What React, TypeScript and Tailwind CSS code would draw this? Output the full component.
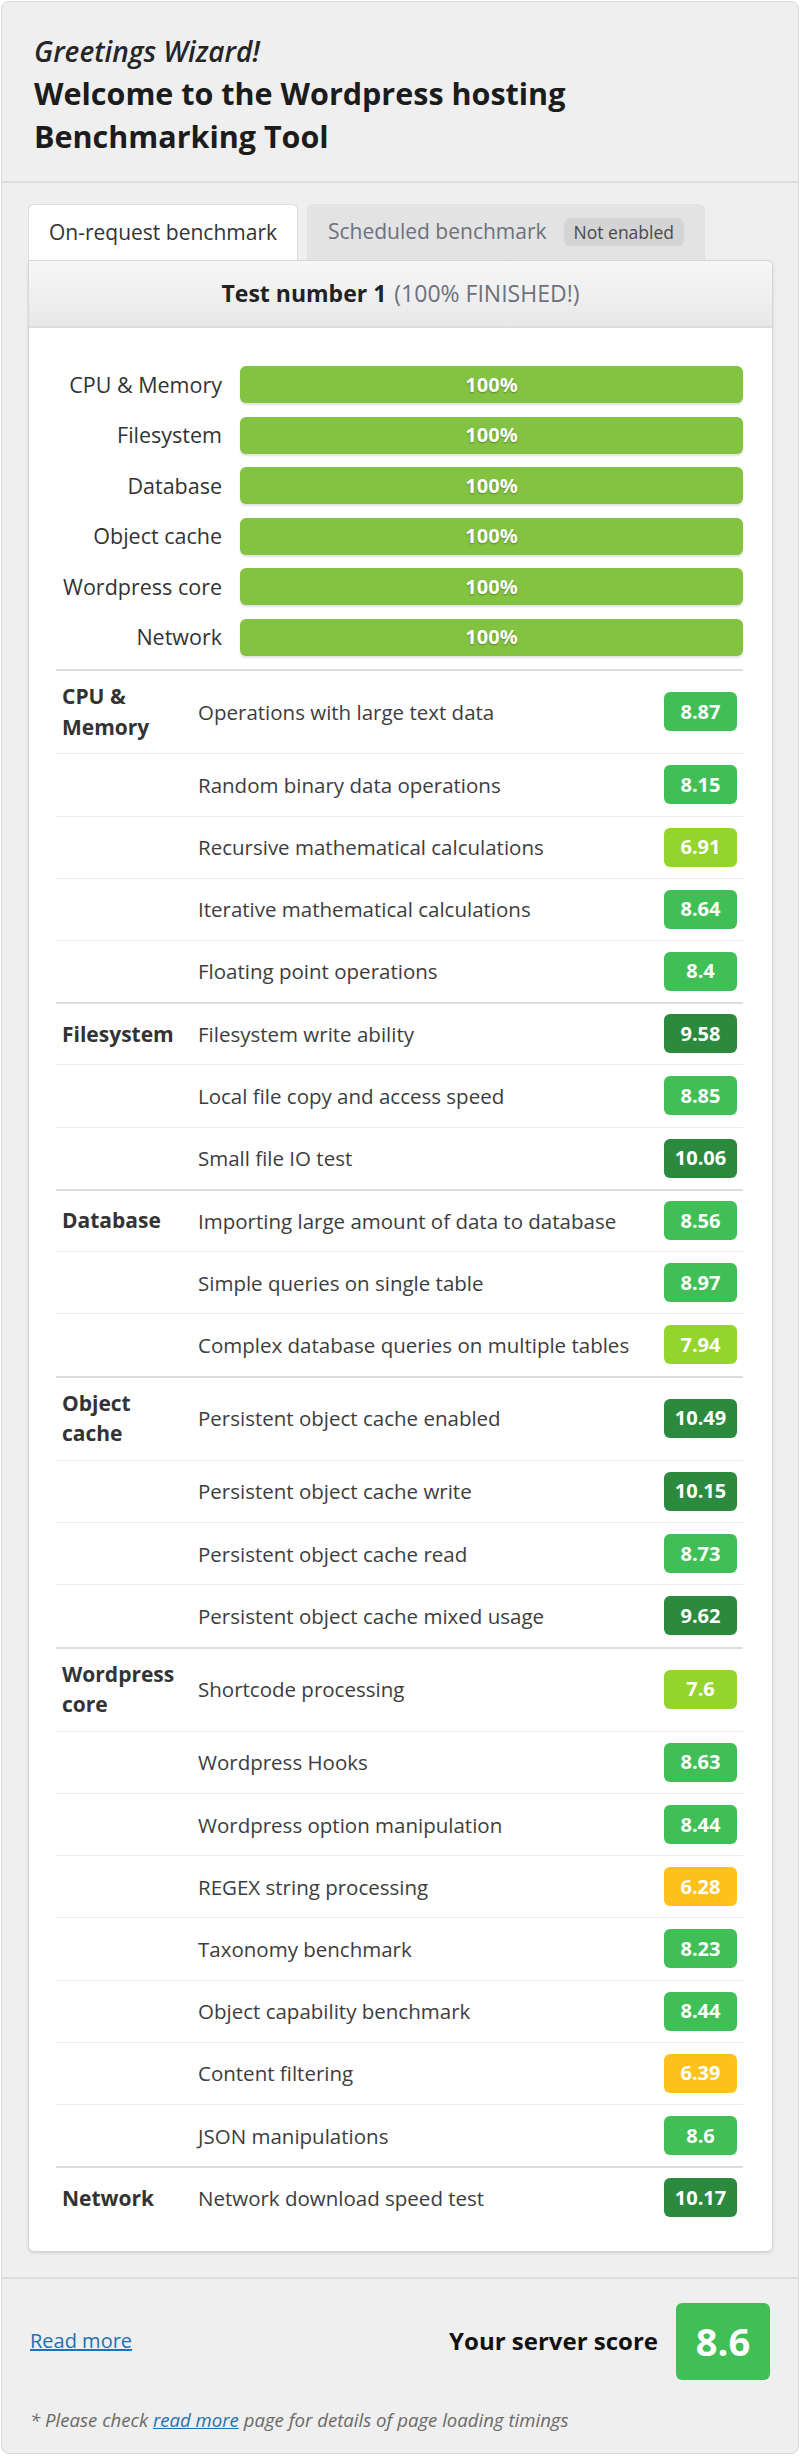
import React from "react";

type Test = { name: string; score: number };
type Group = { cat: string[]; tests: Test[] };

const groups: Group[] = [
  {
    cat: ["CPU &", "Memory"],
    tests: [
      { name: "Operations with large text data", score: 8.87 },
      { name: "Random binary data operations", score: 8.15 },
      { name: "Recursive mathematical calculations", score: 6.91 },
      { name: "Iterative mathematical calculations", score: 8.64 },
      { name: "Floating point operations", score: 8.4 },
    ],
  },
  {
    cat: ["Filesystem"],
    tests: [
      { name: "Filesystem write ability", score: 9.58 },
      { name: "Local file copy and access speed", score: 8.85 },
      { name: "Small file IO test", score: 10.06 },
    ],
  },
  {
    cat: ["Database"],
    tests: [
      { name: "Importing large amount of data to database", score: 8.56 },
      { name: "Simple queries on single table", score: 8.97 },
      { name: "Complex database queries on multiple tables", score: 7.94 },
    ],
  },
  {
    cat: ["Object", "cache"],
    tests: [
      { name: "Persistent object cache enabled", score: 10.49 },
      { name: "Persistent object cache write", score: 10.15 },
      { name: "Persistent object cache read", score: 8.73 },
      { name: "Persistent object cache mixed usage", score: 9.62 },
    ],
  },
  {
    cat: ["Wordpress", "core"],
    tests: [
      { name: "Shortcode processing", score: 7.6 },
      { name: "Wordpress Hooks", score: 8.63 },
      { name: "Wordpress option manipulation", score: 8.44 },
      { name: "REGEX string processing", score: 6.28 },
      { name: "Taxonomy benchmark", score: 8.23 },
      { name: "Object capability benchmark", score: 8.44 },
      { name: "Content filtering", score: 6.39 },
      { name: "JSON manipulations", score: 8.6 },
    ],
  },
  {
    cat: ["Network"],
    tests: [{ name: "Network download speed test", score: 10.17 }],
  },
];

const bars = ["CPU & Memory", "Filesystem", "Database", "Object cache", "Wordpress core", "Network"];

function badgeClass(s: number) {
  if (s >= 9.5) return "bg-[#2b8a3e]";
  if (s >= 8) return "bg-[#40bf57]";
  if (s >= 6.5) return "bg-[#94d52d]";
  return "bg-[#fcc21b]";
}

function Badge({ score }: { score: number }) {
  return (
    <div
      className={`flex h-[39px] min-w-[73px] items-center justify-center rounded-[6px] px-[10px] text-[20px] font-bold text-white ${badgeClass(score)}`}
    >
      {String(score)}
    </div>
  );
}

export default function App() {
  return (
    <div className="font-['Open_Sans',sans-serif] text-[#333333]">
      <div className="m-px rounded-lg border border-[#d9d9d9] bg-[#efefef]">
        {/* Header */}
        <div className="border-b-2 border-[#dddddd] px-[32px] pt-[32px] pb-[23px]">
          <div className="text-[28px] font-semibold italic leading-[34px] text-[#262626]">Greetings Wizard!</div>
          <div className="mt-[4px] text-[30.5px] font-bold leading-[43px] text-[#1c1c1c]">
            Welcome to the Wordpress hosting
            <br />
            Benchmarking Tool
          </div>
        </div>

        {/* Tabs */}
        <div className="flex items-end gap-[9px] px-[26px] pt-[21px]">
          <div className="flex h-[56px] w-[270px] shrink-0 items-center whitespace-nowrap rounded-t-[6px] border border-b-0 border-[#dedede] bg-white px-[20px] text-[21px] text-[#333333]">
            On-request benchmark
          </div>
          <div className="flex h-[56px] w-[398px] shrink-0 items-center gap-[17px] whitespace-nowrap rounded-t-[6px] bg-[#e3e3e3] px-[21px] text-[21px] text-[#6c727d]">
            <span>Scheduled benchmark</span>
            <span className="flex h-[28px] items-center whitespace-nowrap rounded-[6px] bg-[#d4d4d4] px-[10px] text-[17.5px] text-[#4a4a4a]">
              Not enabled
            </span>
          </div>
        </div>

        {/* Card */}
        <div className="ml-[26px] mr-[25px] rounded-b-[6px] rounded-tr-[6px] border border-[#d6d6d6] bg-white shadow-[0_1px_3px_rgba(0,0,0,0.12)]">
          <div className="flex h-[67px] items-center justify-center gap-[8px] rounded-tr-[6px] border-b-2 border-[#dcdcdc] bg-[linear-gradient(to_bottom,#f7f7f7,#e8e8e8)] text-[23px]">
            <span className="font-bold text-[#222222]">Test number 1</span>
            <span className="text-[#6c727d]">(100% FINISHED!)</span>
          </div>

          <div className="pl-[27px] pr-[29px] pt-[38px] pb-[22px]">
            <div className="flex flex-col gap-[13.6px]">
              {bars.map((b) => (
                <div key={b} className="flex items-center gap-[18px]">
                  <div className="w-[166px] whitespace-nowrap text-right text-[21.5px] leading-[28px] text-[#333333]">{b}</div>
                  <div className="flex h-[37px] flex-1 items-center justify-center rounded-[6px] bg-[#84c341] text-[20px] font-bold text-white shadow-[0_2px_2px_rgba(0,0,0,0.12)] [text-shadow:0_1px_2px_rgba(0,0,0,0.35)]">
                    100%
                  </div>
                </div>
              ))}
            </div>

            <div className="mt-[13px]">
              {groups.map((g) => (
                <div key={g.cat.join(" ")} className="border-t-2 border-[#dddddd]">
                  {g.tests.map((t, i) => (
                    <div
                      key={t.name}
                      className={`flex items-center px-[6px] pb-[11.2px] ${
                        i === 0 ? "pt-[10.2px]" : "border-t border-[#ececec] pt-[11px]"
                      }`}
                    >
                      <div className="w-[136px] text-[21px] font-bold leading-[30.5px] text-[#333333]">
                        {i === 0
                          ? g.cat.map((c) => (
                              <div key={c}>{c}</div>
                            ))
                          : null}
                      </div>
                      <div className="flex min-h-[39px] flex-1 items-center text-[20.5px] leading-[28px] text-[#3d3d3d]">
                        {t.name}
                      </div>
                      <Badge score={t.score} />
                    </div>
                  ))}
                </div>
              ))}
            </div>
          </div>
        </div>

        {/* Footer */}
        <div className="mt-[25px] border-t-2 border-[#dddddd] px-[28px] pt-[24px] pb-[20px]">
          <div className="flex items-center justify-between">
            <a href="#" className="text-[20px] text-[#2271b1] underline">
              Read more
            </a>
            <div className="flex items-center gap-[18px]">
              <span className="text-[24px] font-bold text-[#111111]">Your server score</span>
              <div className="flex h-[77px] w-[94px] items-center justify-center rounded-[6px] bg-[#40bf57] text-[38px] font-bold text-white">
                8.6
              </div>
            </div>
          </div>
          <div className="mt-[27px] text-[18.6px] italic leading-[26px] text-[#6a6a6a]">
            * Please check{" "}
            <a href="#" className="text-[#2271b1] underline">
              read more
            </a>{" "}
            page for details of page loading timings
          </div>
        </div>
      </div>
    </div>
  );
}
